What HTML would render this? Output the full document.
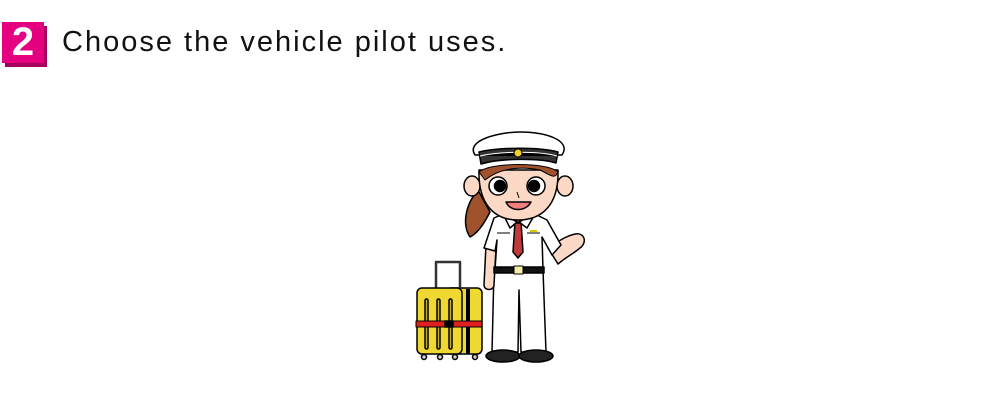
<!DOCTYPE html>
<html><head><meta charset="utf-8"><style>
html,body{margin:0;padding:0;background:#fff;width:1000px;height:400px;overflow:hidden;position:relative;font-family:"Liberation Sans",sans-serif}
.num{position:absolute;left:2px;top:22px;width:42px;height:41px;background:#e4007f;box-shadow:3px 4px 0 #a8005c;color:#fff;font-weight:bold;font-size:40px;line-height:41px;text-align:center}
.t{position:absolute;left:62px;top:26px;font-size:29px;color:#111;letter-spacing:2px;white-space:nowrap}
svg{position:absolute;left:0;top:0}
</style></head><body>
<div class="num">2</div>
<div class="t">Choose the vehicle pilot uses.</div>
<svg width="1000" height="400" viewBox="0 0 1000 400" stroke="#000" stroke-width="1.5" stroke-linejoin="round">
<rect x="446" y="288" width="36" height="66" rx="5" fill="#f0d832"/>
<path d="M468 289 L468 354" stroke-width="4"/>
<path d="M436 289 V262 H460 V289" fill="none" stroke-width="2.5" stroke="#333"/>
<rect x="417" y="288" width="45" height="66" rx="5" fill="#f0d832"/>
<rect x="425" y="299" width="3" height="50" rx="1.5" fill="#c8b020"/>
<rect x="437" y="299" width="3" height="50" rx="1.5" fill="#c8b020"/>
<rect x="449" y="299" width="3" height="50" rx="1.5" fill="#c8b020"/>
<rect x="416" y="321" width="66" height="6" fill="#e02020" stroke-width="1"/>
<rect x="445" y="321" width="8" height="6" fill="#000"/>
<g fill="#ccc"><circle cx="424" cy="357" r="2.5"/><circle cx="440" cy="357" r="2.5"/><circle cx="455" cy="357" r="2.5"/><circle cx="475" cy="357" r="2.5"/></g>
<path d="M478 190 C465 205 462 225 470 237 C478 233 485 222 490 212 Z" fill="#a0522d"/>
<path d="M494 270 L492 352 H518 L519 290 L521 352 H546 L543 270 Z" fill="#fff"/>
<ellipse cx="503" cy="356" rx="17" ry="6" fill="#222"/>
<ellipse cx="536" cy="356" rx="17" ry="6" fill="#222"/>
<path d="M486 245 L484 285 C484 291 494 291 494 285 L496 248 Z" fill="#fbd9c6"/>
<path d="M548 248 L558 264 C566 257 573 254 580 248 C588 242 584 232 575 234 C567 236 562 239 556 243 Z" fill="#fbd9c6"/>
<path d="M494 218 L484 248 L495 251 L497 240 L495 270 H543 L542 237 L552 255 L561 245 L547 220 L535 214 H503 Z" fill="#fff"/>
<rect x="494" y="267" width="50" height="6" fill="#111"/>
<rect x="514" y="266" width="9" height="8" fill="#f5eeaa" stroke-width="1"/>
<path d="M497 233 H510 M527 233 H540" stroke-width="1"/>
<path d="M530 231 H537" stroke="#e0c000" stroke-width="2"/>
<path d="M515 221 L521 221 L523 252 L518 258 L513 252 Z" fill="#c0393b"/>
<path d="M513 216 L523 216 L521 223 L515 223 Z" fill="#c0393b"/>
<path d="M503 214 L517 222 L510 228 Z M535 214 L519 222 L527 228 Z" fill="#fff"/>
<ellipse cx="472" cy="186" rx="8" ry="10" fill="#fbd9c6"/>
<ellipse cx="565" cy="186" rx="8" ry="10" fill="#fbd9c6"/>
<path d="M479 170 C478 205 495 220 518 220 C542 220 559 205 558 170 Z" fill="#fbd9c6"/>
<path d="M479 172 C490 162 548 162 558 172 C555 180 550 175 540 170 C520 166 500 168 485 180 Z" fill="#a0522d" stroke-width="1"/>
<circle cx="498" cy="186" r="9" fill="#fff"/><circle cx="500" cy="186" r="5.5" fill="#000"/>
<circle cx="536" cy="186" r="9" fill="#fff"/><circle cx="534" cy="186" r="5.5" fill="#000"/>
<path d="M506 202 C510 212 526 212 531 202 Z" fill="#f08080"/>
<path d="M517 192 L519 198" stroke-width="1"/>
<path d="M475 155 C465 140 500 132 520 132 C545 132 572 140 562 155 Z" fill="#fff"/>
<path d="M479 152 C500 147 540 147 558 152 L556 163 C540 158 500 158 481 164 Z" fill="#333"/>
<path d="M480 156 C500 151 540 151 557 156" stroke="#fff" stroke-width="1"/>
<circle cx="518" cy="153" r="4" fill="#f0d020" stroke-width="1"/>
</svg>
</body></html>
